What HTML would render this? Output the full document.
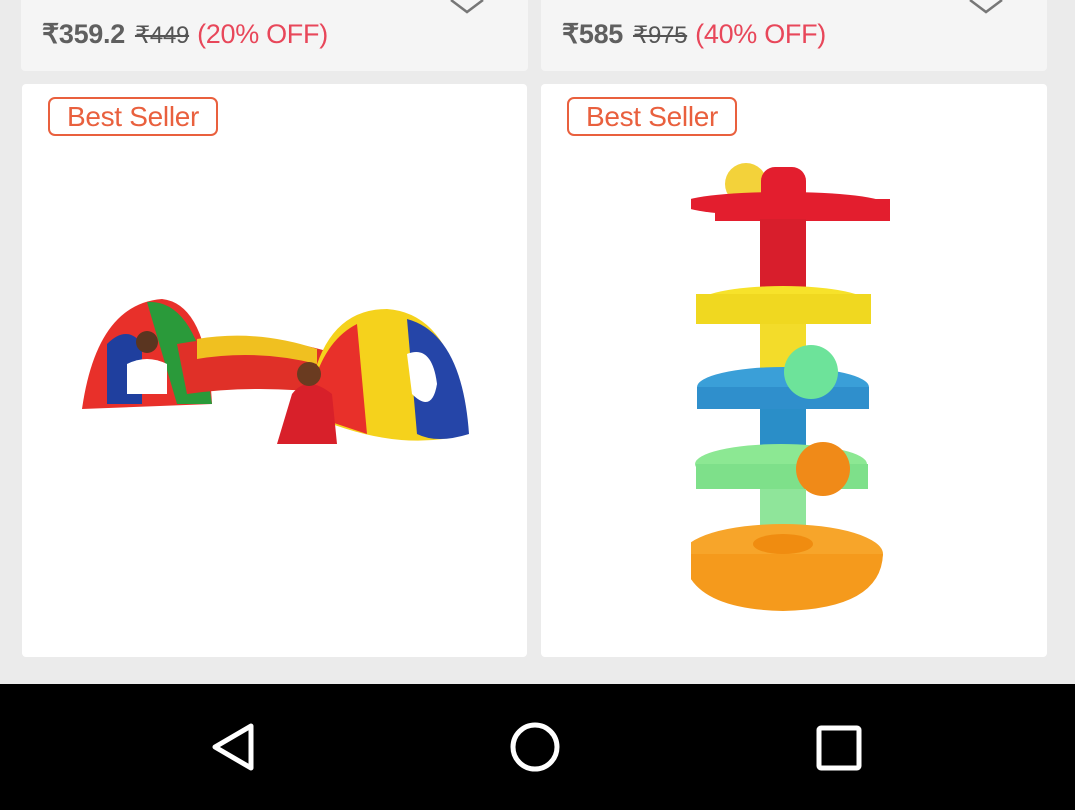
<!DOCTYPE html>
<html><head><meta charset="utf-8"><style>
*{margin:0;padding:0;box-sizing:border-box}
body{width:1075px;height:810px;background:#ebebeb;position:relative;overflow:hidden;font-family:"Liberation Sans",sans-serif}
.c{position:absolute;border-radius:4px}
.top{background:#f5f5f5;top:-10px;height:81px}
.bot{background:#fff;top:84px;height:573px}
.price{position:absolute;top:20px;font-size:27px;white-space:nowrap;letter-spacing:-0.3px}
.price b{color:#5f5f5f}
.price s{color:#555;font-size:24px;margin:0 8px 0 10px}
.price span{color:#e8475a}
.bs{position:absolute;top:13px;left:26px;border:2.5px solid #e9603e;border-radius:7px;color:#e9603e;font-size:28px;line-height:35px;width:170px;text-align:center;white-space:nowrap;letter-spacing:-0.3px}
.nav{position:absolute;left:0;top:684px;width:1075px;height:126px;background:#000}
</style></head><body>
<div class="c top" style="left:21px;width:507px">
<div class="price" style="left:21px;top:29px"><b>₹359.2</b><s>₹449</s><span>(20% OFF)</span></div>
<svg style="position:absolute;left:428px;top:2px" width="36" height="22"><path d="M2 8 L18 20 L34 8" stroke="#777" stroke-width="2.5" fill="none"/></svg>
</div>
<div class="c top" style="left:541px;width:506px">
<div class="price" style="left:21px;top:29px"><b>₹585</b><s>₹975</s><span>(40% OFF)</span></div>
<svg style="position:absolute;left:427px;top:2px" width="36" height="22"><path d="M2 8 L18 20 L34 8" stroke="#777" stroke-width="2.5" fill="none"/></svg>
</div>
<div class="c bot" style="left:22px;width:505px">
<div class="bs">Best Seller</div>
<svg style="position:absolute;left:55px;top:200px" width="400" height="190">
<path d="M5 125 Q20 20 85 15 Q130 20 135 120 Z" fill="#e8302a"/>
<path d="M70 18 Q120 15 135 120 L100 120 Z" fill="#2a9a3a"/>
<path d="M30 60 Q50 40 65 60 L65 120 L30 120Z" fill="#1f3f9e"/>
<path d="M100 60 Q180 45 260 70 L260 110 Q180 100 110 110Z" fill="#e03028"/>
<path d="M120 55 Q180 45 240 65 L240 80 Q180 65 120 75Z" fill="#f0c020"/>
<path d="M230 130 Q240 25 310 25 Q380 30 390 150 Q320 170 230 130Z" fill="#f5d21c"/>
<path d="M330 35 Q385 50 392 150 Q360 160 340 150Z" fill="#2545a8"/>
<path d="M330 70 Q355 60 360 100 Q355 130 335 110Z" fill="#fff"/>
<path d="M230 130 Q240 60 280 40 L290 150Z" fill="#e8302a"/>
<path d="M215 110 Q230 90 255 110 L260 160 L200 160Z" fill="#d8202a"/>
<circle cx="232" cy="90" r="12" fill="#6a3b20"/>
<circle cx="70" cy="58" r="11" fill="#5a3520"/>
<path d="M50 80 Q70 70 90 80 L90 110 L50 110Z" fill="#fff"/>
</svg>
</div>
<div class="c bot" style="left:541px;width:506px">
<div class="bs">Best Seller</div>
<svg style="position:absolute;left:150px;top:75px" width="210" height="460">
<circle cx="55" cy="25" r="21" fill="#f3d23a"/>
<rect x="70" y="8" width="45" height="40" rx="14" fill="#e31e2e"/>
<ellipse cx="92" cy="45" rx="102" ry="12" fill="#e31e2e"/>
<rect x="24" y="40" width="175" height="22" fill="#e31e2e"/>
<rect x="69" y="60" width="46" height="70" fill="#d81e2c"/>
<ellipse cx="92" cy="145" rx="87" ry="18" fill="#f7e22a"/>
<rect x="5" y="135" width="175" height="30" fill="#f0d820"/>
<rect x="69" y="165" width="46" height="50" fill="#f3dc2a"/>
<ellipse cx="92" cy="228" rx="86" ry="20" fill="#3a9fd8"/>
<rect x="6" y="228" width="172" height="22" fill="#2f8fcc"/>
<circle cx="120" cy="213" r="27" fill="#6de39a"/>
<rect x="69" y="250" width="46" height="60" fill="#2a8ec8"/>
<ellipse cx="90" cy="305" rx="86" ry="20" fill="#8ce893"/>
<rect x="5" y="305" width="172" height="25" fill="#7ee08a"/>
<circle cx="132" cy="310" r="27" fill="#f08a18"/>
<rect x="69" y="330" width="46" height="55" fill="#8fe59a"/>
<ellipse cx="92" cy="395" rx="100" ry="30" fill="#f7a52a"/>
<path d="M-8 395 Q-5 450 92 452 Q190 450 192 395 Z" fill="#f59a1c"/>
<ellipse cx="92" cy="385" rx="30" ry="10" fill="#f08c10"/>
</svg>
</div>
<div class="nav">
<svg style="position:absolute;left:205px;top:38px" width="60" height="52"><path d="M46 4 L46 46 L10 25 Z" stroke="#fff" stroke-width="5" fill="none" stroke-linejoin="round"/></svg>
<svg style="position:absolute;left:508px;top:37px" width="56" height="54"><circle cx="27" cy="26" r="22" stroke="#fff" stroke-width="5" fill="none"/></svg>
<svg style="position:absolute;left:814px;top:40px" width="50" height="50"><rect x="5" y="4" width="40" height="40" rx="2" stroke="#fff" stroke-width="5" fill="none"/></svg>
</div>
</body></html>
